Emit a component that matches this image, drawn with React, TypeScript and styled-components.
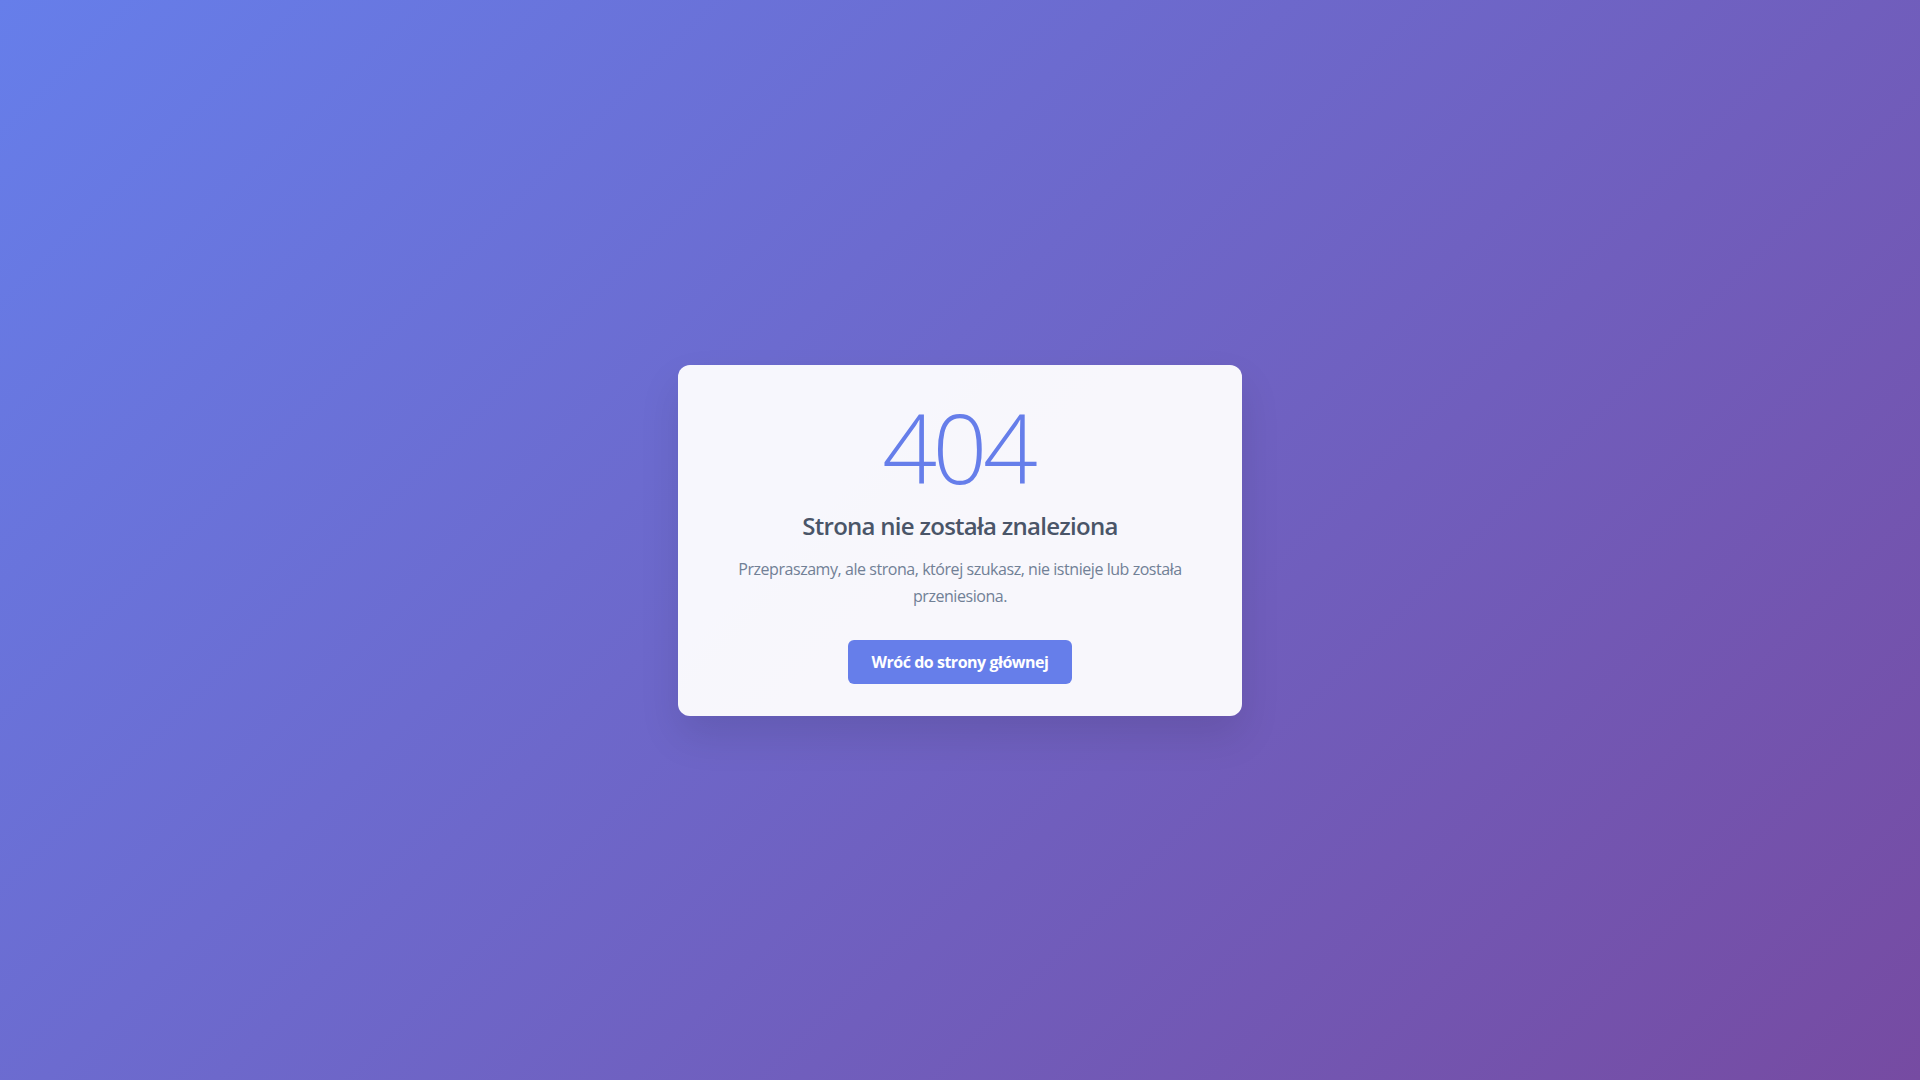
import React from "react";
import styled, { createGlobalStyle } from "styled-components";

const GlobalStyle = createGlobalStyle`
  * { box-sizing: border-box; }
  html, body { margin: 0; padding: 0; }
  body {
    font-family: "Open Sans", "Noto Sans", "Liberation Sans", sans-serif;
    background: linear-gradient(135deg, #667eea 0%, #764ba2 100%);
    min-height: 100vh;
  }
`;

const Page = styled.main`
  min-height: 100vh;
  display: flex;
  align-items: center;
  justify-content: center;
  padding: 20px;
`;

const Card = styled.section`
  width: 564px;
  display: flex;
  flex-direction: column;
  align-items: center;
  background: rgba(255, 255, 255, 0.95);
  border-radius: 12px;
  padding: 32px;
  text-align: center;
  box-shadow: 0 20px 40px rgba(0, 0, 0, 0.1);
`;

const Code = styled.h1`
  margin: 0 0 13px;
  font-size: 96px;
  font-weight: 300;
  line-height: 100px;
  letter-spacing: -0.045em;
  text-indent: -0.045em;
  color: #667eea;
`;

const Title = styled.h2`
  margin: 0 0 14px;
  font-size: 24px;
  font-weight: 600;
  line-height: 32px;
  letter-spacing: -0.03em;
  color: #4a5568;
`;

const Text = styled.p`
  margin: 0 0 30px;
  font-size: 16px;
  line-height: 27px;
  letter-spacing: -0.028em;
  color: #718096;
`;

const HomeButton = styled.a`
  display: block;
  padding: 12px 24px;
  background: #667eea;
  color: #ffffff;
  border-radius: 6px;
  font-size: 16px;
  font-weight: 700;
  line-height: 20px;
  letter-spacing: -0.03em;
  text-decoration: none;
`;

export default function App() {
  return (
    <>
      <GlobalStyle />
      <Page>
        <Card>
          <Code>404</Code>
          <Title>Strona nie została znaleziona</Title>
          <Text>
            Przepraszamy, ale strona, której szukasz, nie istnieje lub została
            przeniesiona.
          </Text>
          <HomeButton href="#">Wróć do strony głównej</HomeButton>
        </Card>
      </Page>
    </>
  );
}
